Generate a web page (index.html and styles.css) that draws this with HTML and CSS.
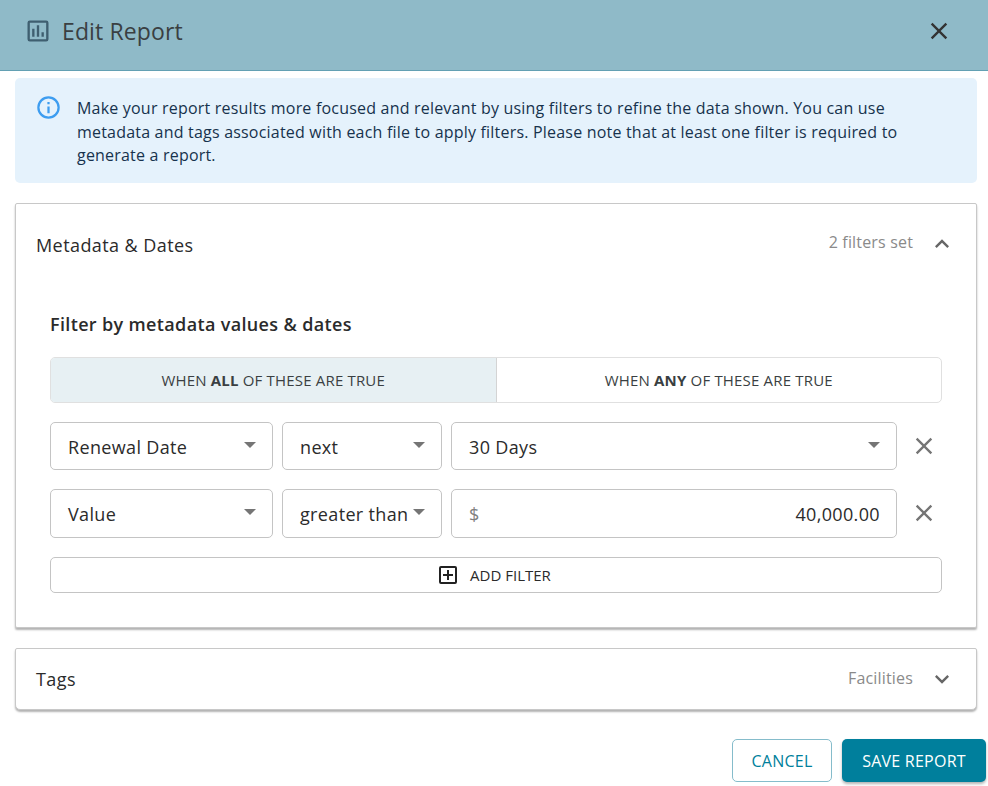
FILE: index.html
```html
<!DOCTYPE html>
<html lang="en">
<head>
<meta charset="utf-8">
<title>Edit Report</title>
<link rel="stylesheet" href="styles.css">
</head>
<body>
<header class="header">
  <svg class="header-icon" viewBox="0 0 24 24"><path d="M19 3H5a2 2 0 0 0-2 2v14a2 2 0 0 0 2 2h14a2 2 0 0 0 2-2V5a2 2 0 0 0-2-2zm0 16H5V5h14v14zM7 10h2v7H7zm4-3h2v10h-2zm4 6h2v4h-2z"/></svg>
  <h1 class="title">Edit Report</h1>
  <svg class="close" viewBox="0 0 24 24"><path d="M19 6.41 17.59 5 12 10.59 6.41 5 5 6.41 10.59 12 5 17.59 6.41 19 12 13.41 17.59 19 19 17.59 13.41 12z"/></svg>
</header>
<main class="content">
  <section class="alert">
    <svg class="alert-icon" viewBox="0 0 24 24"><path d="M11 7h2v2h-2zm0 4h2v6h-2zm1-9a10 10 0 1 0 0 20 10 10 0 0 0 0-20zm0 18a8 8 0 1 1 0-16 8 8 0 0 1 0 16z"/></svg>
    <p class="alert-text">Make your report results more focused and relevant by using filters to refine the data shown. You can use metadata and tags associated with each file to apply filters. Please note that at least one filter is required to generate a report.</p>
  </section>
  <section class="panel">
    <div class="panel-head">
      <span class="panel-title">Metadata &amp; Dates</span>
      <span class="panel-note">2 filters set</span>
      <svg class="chev" viewBox="0 0 24 24"><path d="M12 8l-6 6 1.41 1.41L12 10.83l4.59 4.58L18 14z"/></svg>
    </div>
    <div class="panel-body">
      <h2 class="subhead">Filter by metadata values &amp; dates</h2>
      <div class="toggle">
        <div class="toggle-opt active"><span>WHEN <b>ALL</b> OF THESE ARE TRUE</span></div>
        <div class="toggle-opt"><span>WHEN <b>ANY</b> OF THESE ARE TRUE</span></div>
      </div>
      <div class="row row-a">
        <div class="field f1"><span>Renewal Date</span><i class="caret"></i></div>
        <div class="field f2"><span>next</span><i class="caret"></i></div>
        <div class="field f3"><span>30 Days</span><i class="caret"></i></div>
        <svg class="remove" viewBox="0 0 24 24"><path d="M19 6.41 17.59 5 12 10.59 6.41 5 5 6.41 10.59 12 5 17.59 6.41 19 12 13.41 17.59 19 19 17.59 13.41 12z"/></svg>
      </div>
      <div class="row row-b">
        <div class="field f1"><span>Value</span><i class="caret"></i></div>
        <div class="field f2"><span>greater than</span><i class="caret"></i></div>
        <div class="field f3"><span class="dollar">$</span><span class="amount">40,000.00</span></div>
        <svg class="remove" viewBox="0 0 24 24"><path d="M19 6.41 17.59 5 12 10.59 6.41 5 5 6.41 10.59 12 5 17.59 6.41 19 12 13.41 17.59 19 19 17.59 13.41 12z"/></svg>
      </div>
      <div class="add">
        <svg class="add-icon" viewBox="0 0 24 24"><path d="M19 3H5a2 2 0 0 0-2 2v14a2 2 0 0 0 2 2h14a2 2 0 0 0 2-2V5a2 2 0 0 0-2-2zm0 16H5V5h14v14zm-8-2h2v-4h4v-2h-4V7h-2v4H7v2h4z"/></svg>
        <span>ADD FILTER</span>
      </div>
    </div>
  </section>
  <section class="panel panel-tags">
    <div class="panel-head tags-head">
      <span class="panel-title">Tags</span>
      <span class="panel-note">Facilities</span>
      <svg class="chev" viewBox="0 0 24 24"><path d="M16.59 8.59 12 13.17 7.41 8.59 6 10l6 6 6-6z"/></svg>
    </div>
  </section>
</main>
<footer class="footer">
  <div class="btn btn-cancel">CANCEL</div>
  <div class="btn btn-save">SAVE REPORT</div>
</footer>
</body>
</html>
```
FILE: styles.css
```css
* { box-sizing: border-box; }
html, body { margin: 0; padding: 0; }
body {
  width: 988px;
  height: 786px;
  overflow: hidden;
  background: #fff;
  font-family: "Open Sans", "Liberation Sans", sans-serif;
  color: #2b2b2b;
}
.header {
  height: 71px;
  background: #8fbac8;
  border-bottom: 1px solid #63a0b3;
  display: flex;
  align-items: center;
  padding: 0 35px 9px 24px;
}
.header-icon { width: 28px; height: 28px; fill: #3f5f70; }
.title {
  margin: 0 0 0 10px;
  flex: 1;
  font-size: 23px;
  font-weight: 400;
  line-height: 32px;
  letter-spacing: .12px;
  color: #3a3f42;
}
.close { width: 28px; height: 28px; fill: #333; }
.content { padding: 7px 11px 0 15px; }
.alert {
  height: 105px;
  background: #e5f2fc;
  border-radius: 5px;
  display: flex;
  padding: 19px 60px 0 20px;
}
.alert-icon { width: 27px; height: 27px; fill: #3d9df0; flex: none; margin-top: -3px; }
.alert-text {
  margin: 0 0 0 15px;
  font-size: 16px;
  line-height: 23.5px;
  letter-spacing: .2px;
  color: #17324d;
}
.panel {
  margin-top: 20px;
  background: #fff;
  border: 1px solid #c8c8c8;
  border-radius: 2px;
  box-shadow: 0 2px 2px rgba(0,0,0,.3);
  height: 425px;
}
.panel-tags { height: 62px; border-radius: 2px 2px 5px 5px; }
.panel-head {
  display: flex;
  align-items: center;
  height: 82px;
  padding: 0 20px 0 20px;
}
.tags-head { height: 60px; }
.panel-title { flex: 1; font-size: 18px; letter-spacing: .42px; color: #2b2b2b; }
.panel-note { font-size: 16px; letter-spacing: .17px; color: #8a8a8a; margin-right: 15px; margin-top: -6px; }
.tags-head .panel-note { margin-top: -3px; }
.chev { width: 28px; height: 28px; fill: #666; margin-top: -2px; }
.tags-head .chev { margin-top: 0; }
.panel-body { padding: 0 34px; }
.subhead { margin: 26px 0 21px; font-size: 18px; line-height: 24px; font-weight: 600; letter-spacing: .35px; color: #2b2b2b; }
.toggle {
  display: flex;
  height: 46px;
  border: 1px solid #e0e0e0;
  border-radius: 5px;
  overflow: hidden;
}
.toggle-opt {
  flex: 1;
  display: flex;
  align-items: center;
  justify-content: center;
  font-size: 15px;
  letter-spacing: .18px;
  color: #3a3f42;
}
.toggle-opt.active { background: #e7f0f3; border-right: 1px solid #d4d4d4; }
.row { display: flex; align-items: center; margin-top: 19px; }
.row-a { height: 48px; }
.row-b { height: 49px; }
.field {
  height: 100%;
  border: 1px solid #c4c4c4;
  border-radius: 5px;
  display: flex;
  align-items: center;
  padding: 0 16px 0 17px;
  font-size: 18px;
  letter-spacing: .35px;
  color: #2b2b2b;
  justify-content: space-between;
  margin-right: 9px;
  white-space: nowrap;
}
.row-a .field span { margin-top: 1px; }
.f1 { width: 223px; }
.f2 { width: 160px; }
.f3 { width: 446px; margin-right: 0; }
.caret {
  width: 0;
  height: 0;
  border-left: 6px solid transparent;
  border-right: 6px solid transparent;
  border-top: 6px solid #757575;
  margin-top: -3px;
  flex: none;
}
.dollar { color: #808080; }
.amount { color: #2b2b2b; }
.remove { width: 28px; height: 28px; fill: #757575; margin-left: 13px; }
.row-b .remove { margin-top: -2px; }
.add {
  margin-top: 19px;
  height: 36px;
  border: 1px solid #c4c4c4;
  border-radius: 5px;
  display: flex;
  align-items: center;
  justify-content: center;
  gap: 10px;
  padding-right: 5px;
  font-size: 15px;
  color: #2b2b2b;
}
.add-icon { width: 24px; height: 24px; fill: #222; }
.footer {
  display: flex;
  justify-content: flex-end;
  gap: 10px;
  padding: 29px 2px 0 0;
}
.btn {
  height: 43px;
  display: flex;
  align-items: center;
  justify-content: center;
  font-size: 16px;
  letter-spacing: .25px;
  border-radius: 5px;
}
.btn-cancel { width: 100px; border: 1px solid #85bccb; color: #007f9c; }
.btn-save { width: 144px; background: #007f9c; color: #fff; box-shadow: 0 2px 3px rgba(0,0,0,.3); }
```
